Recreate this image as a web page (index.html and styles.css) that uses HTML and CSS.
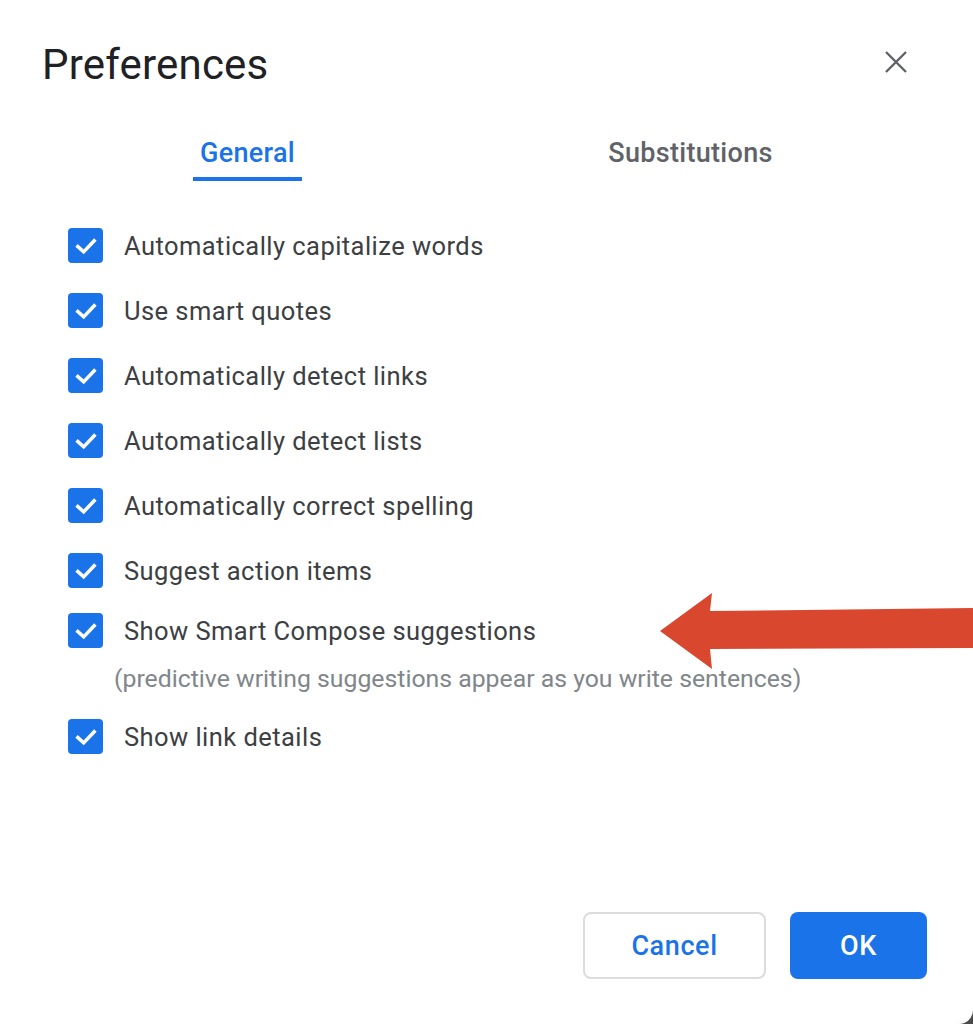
FILE: index.html
```html
<!DOCTYPE html>
<html>
<head>
<meta charset="utf-8">
<link rel="stylesheet" href="styles.css">
</head>
<body>
<div class="dialog">
  <div class="header">
    <h1 class="title">Preferences</h1>
    <button class="close" aria-label="Close">
      <svg width="24" height="24" viewBox="0 0 24 24"><path d="M2 2 L22 22 M22 2 L2 22" stroke="#5f6368" stroke-width="2.4" fill="none"/></svg>
    </button>
  </div>
  <div class="tabs">
    <div class="tab active"><span class="tab-label">General</span></div>
    <div class="tab"><span class="tab-label">Substitutions</span></div>
  </div>
  <ul class="options">
    <li class="option"><span class="cb"><svg viewBox="0 0 24 24"><path d="M5 12.5 L10 17 L19 7.5" /></svg></span><span class="label">Automatically capitalize words</span></li>
    <li class="option"><span class="cb"><svg viewBox="0 0 24 24"><path d="M5 12.5 L10 17 L19 7.5" /></svg></span><span class="label">Use smart quotes</span></li>
    <li class="option"><span class="cb"><svg viewBox="0 0 24 24"><path d="M5 12.5 L10 17 L19 7.5" /></svg></span><span class="label">Automatically detect links</span></li>
    <li class="option"><span class="cb"><svg viewBox="0 0 24 24"><path d="M5 12.5 L10 17 L19 7.5" /></svg></span><span class="label">Automatically detect lists</span></li>
    <li class="option"><span class="cb"><svg viewBox="0 0 24 24"><path d="M5 12.5 L10 17 L19 7.5" /></svg></span><span class="label">Automatically correct spelling</span></li>
    <li class="option option-before-smart"><span class="cb"><svg viewBox="0 0 24 24"><path d="M5 12.5 L10 17 L19 7.5" /></svg></span><span class="label">Suggest action items</span></li>
    <li class="option option-smart"><span class="cb"><svg viewBox="0 0 24 24"><path d="M5 12.5 L10 17 L19 7.5" /></svg></span><span class="label">Show Smart Compose suggestions</span></li>
    <li class="hint">(predictive writing suggestions appear as you write sentences)</li>
    <li class="option option-last"><span class="cb"><svg viewBox="0 0 24 24"><path d="M5 12.5 L10 17 L19 7.5" /></svg></span><span class="label">Show link details</span></li>
  </ul>
  <div class="footer">
    <button class="btn btn-cancel">Cancel</button>
    <button class="btn btn-ok">OK</button>
  </div>
  <svg class="arrow" width="315" height="76" viewBox="0 0 315 76"><path d="M0 38 L52 0 L50 18 L315 15 L315 55 L50 56 L52 76 Z" fill="#d9472f"/></svg>
</div>
</body>
</html>
```
FILE: styles.css
```css
* { box-sizing: border-box; }
html, body { margin: 0; padding: 0; }
body {
  width: 973px;
  height: 1024px;
  background: #4a4a4a;
  font-family: Roboto, "Liberation Sans", sans-serif;
  overflow: hidden;
}
.dialog {
  position: relative;
  width: 973px;
  height: 1024px;
  background: #fff;
  border-bottom-right-radius: 14px;
  display: flex;
  flex-direction: column;
}
.header {
  display: flex;
  align-items: center;
  justify-content: space-between;
  padding: 40px 65px 0 42px;
  height: 88px;
}
.title {
  margin: 0;
  font-weight: 400;
  font-size: 42px;
  color: #202124;
  letter-spacing: 0.2px;
}
.close {
  border: none;
  background: none;
  padding: 0;
  width: 24px;
  height: 24px;
  margin-top: -4px;
}
.close svg { display: block; }
.tabs {
  display: flex;
  padding: 49px 0 0 0;
  margin-left: 26px;
}
.tab {
  flex: 0 0 443px;
  display: flex;
  justify-content: center;
}
.tab-label {
  display: inline-block;
  font-size: 27px;
  font-weight: 500;
  letter-spacing: 0.3px;
  color: #5f6368;
  padding: 0 7px 8px;
  border-bottom: 4px solid transparent;
}
.tab.active .tab-label {
  color: #1a73e8;
  border-bottom-color: #1a73e8;
}
.options {
  list-style: none;
  margin: 0;
  padding: 47px 0 0 68px;
}
.option {
  display: flex;
  align-items: center;
  gap: 21px;
  height: 35px;
  margin-bottom: 30px;
}
.option-before-smart { margin-bottom: 25px; }
.option-smart { margin-bottom: 0; }
.hint {
  margin: 16px 0 20px 46px;
  font-size: 24.8px;
  color: #80868b;
  height: 35px;
  line-height: 30px;
}
.cb {
  width: 35px;
  height: 35px;
  background: #1a73e8;
  border-radius: 4px;
  display: flex;
  align-items: center;
  justify-content: center;
  flex: none;
}
.cb svg {
  width: 28px;
  height: 28px;
  fill: none;
  stroke: #fff;
  stroke-width: 3;
  stroke-linecap: square;
}
.label {
  font-size: 25.5px;
  color: #3c4043;
  letter-spacing: 0.45px;
}
.footer {
  margin-top: auto;
  display: flex;
  justify-content: flex-end;
  gap: 24px;
  padding: 0 46px 45px 0;
}
.btn {
  height: 67px;
  border-radius: 8px;
  font-family: Roboto, "Liberation Sans", sans-serif;
  font-size: 27px;
  font-weight: 500;
  letter-spacing: 0.6px;
}
.btn-cancel {
  width: 183px;
  background: #fff;
  border: 2px solid #dadce0;
  color: #1a73e8;
}
.btn-ok {
  width: 137px;
  background: #1a73e8;
  border: none;
  color: #fff;
}
.arrow {
  position: absolute;
  left: 660px;
  top: 593px;
}
```
